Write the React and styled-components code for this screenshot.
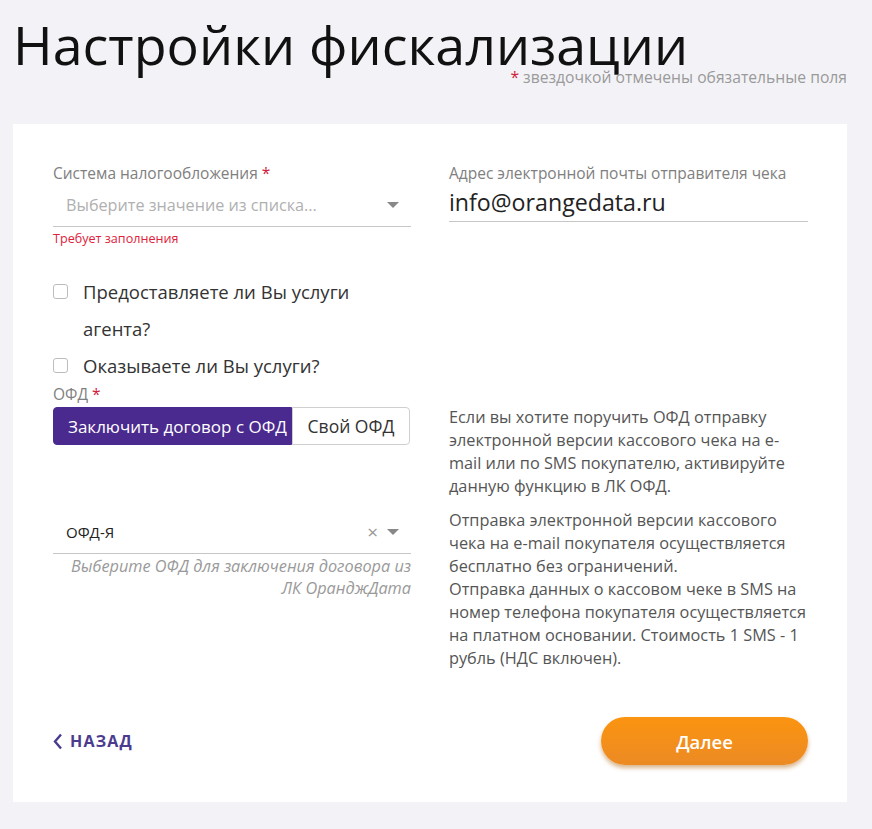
import React, { useState } from 'react';
import styled, { createGlobalStyle } from 'styled-components';

const GlobalStyle = createGlobalStyle`
  html, body {
    margin: 0;
    padding: 0;
    background: #f3f3f7;
    font-family: "Open Sans", "Noto Sans", sans-serif;
  }
`;

const Page = styled.div`
  width: 872px;
  height: 829px;
  padding: 0 25px 27px 13px;
  box-sizing: border-box;
  display: flex;
  flex-direction: column;
`;

const Header = styled.header`
  height: 124px;
  display: flex;
  flex-direction: column;
`;

const Title = styled.h1`
  margin: 19px 0 0 0;
  font-size: 53.8px;
  line-height: 50px;
  font-weight: 400;
  color: #111;
  white-space: nowrap;
`;

const RequiredNote = styled.div`
  align-self: flex-end;
  font-size: 15.7px;
  line-height: 16px;
  color: #9a9a9a;
  white-space: nowrap;
`;

const Star = styled.span`
  color: #d0213b;
  margin-right: 4px;
`;

const Card = styled.main`
  flex: 1;
  background: #fff;
  padding: 40px 39px 37px 40px;
  display: flex;
  flex-direction: column;
`;

const Columns = styled.div`
  display: grid;
  grid-template-columns: 358px 359px;
  column-gap: 38px;
  flex: 1;
`;

const Column = styled.div`
  display: flex;
  flex-direction: column;
`;

const Label = styled.div`
  font-size: 15.5px;
  color: #808080;
  line-height: 19px;
  white-space: nowrap;
`;

const Field = styled.div`
  display: flex;
  align-items: center;
  height: ${({ h }) => h || 34}px;
  border-bottom: 1px solid #c6c6c6;
  padding-left: ${({ pl }) => pl || 0}px;
  padding-right: 12px;
`;

const Placeholder = styled.span`
  flex: 1;
  font-size: 16.2px;
  color: #b0b0b0;
`;

const Value = styled.span`
  flex: 1;
  font-size: ${({ size }) => size || 15}px;
  color: #222;
`;

const Caret = styled.span`
  width: 0;
  height: 0;
  border-left: 6px solid transparent;
  border-right: 6px solid transparent;
  border-top: 6px solid #888;
`;

const Clear = styled.span`
  font-size: 19px;
  color: #999;
  margin-right: 9px;
  line-height: 1;
`;

const Error = styled.div`
  font-size: 12.6px;
  line-height: 17px;
  color: #e0213b;
  margin-top: 3px;
`;

const Checks = styled.div`
  margin-top: 26px;
  display: flex;
  flex-direction: column;
`;

const CheckRow = styled.label`
  display: flex;
  align-items: flex-start;
  gap: 15px;
  font-size: 18.5px;
  line-height: 37px;
  color: #333;
  cursor: pointer;
`;

const Box = styled.span`
  flex: none;
  width: 15px;
  height: 15px;
  margin-top: 11px;
  border: 1px solid #bdbdbd;
  border-radius: 3px;
  box-sizing: border-box;
  background: ${({ checked }) => (checked ? '#4a2a90' : '#fff')};
`;

const OfdLabel = styled(Label)`
  margin-top: 1px;
`;

const Segments = styled.div`
  display: flex;
  margin-top: 3px;
  height: 38px;
`;

const Segment = styled.button`
  height: 38px;
  border: 1px solid ${({ active }) => (active ? '#4a2a8e' : '#cfcfcf')};
  background: ${({ active }) => (active ? '#4a2a8e' : '#fff')};
  color: ${({ active }) => (active ? '#fff' : '#333')};
  font-family: inherit;
  font-size: ${({ active }) => (active ? 17 : 17.5)}px;
  padding: 0 0 0 ${({ wide }) => (wide ? 14 : 0)}px;
  text-align: ${({ wide }) => (wide ? 'left' : 'center')};
  width: ${({ wide }) => (wide ? 239 : 118)}px;
  border-radius: ${({ first }) => (first ? '4px 0 0 4px' : '0 4px 4px 0')};
  cursor: pointer;
  white-space: nowrap;
`;

const OfdField = styled.div`
  margin-top: 66px;
`;

const Hint = styled.div`
  margin-top: 1px;
  text-align: right;
  font-style: italic;
  font-size: 16.3px;
  line-height: 22px;
  color: #9a9a9a;
  white-space: nowrap;
`;

const Info = styled.div`
  margin-top: 184px;
  font-size: 16.3px;
  line-height: 23px;
  color: #555;
  white-space: nowrap;
`;

const Para = styled.p`
  margin: 0 0 11px 0;
`;

const Footer = styled.footer`
  display: flex;
  justify-content: space-between;
  align-items: center;
`;

const BackLink = styled.a`
  display: flex;
  align-items: center;
  gap: 7px;
  font-size: 16px;
  font-weight: 700;
  letter-spacing: 1.2px;
  color: #4a3b8f;
  text-transform: uppercase;
  text-decoration: none;
  cursor: pointer;
`;

const NextButton = styled.button`
  width: 207px;
  height: 48px;
  border: none;
  border-radius: 24px;
  background: linear-gradient(180deg, #fb9410 0%, #ec8a24 100%);
  box-shadow: 0 3px 4px rgba(170, 90, 0, 0.45);
  color: #fff;
  font-family: inherit;
  font-size: 18.5px;
  font-weight: 600;
  cursor: pointer;
`;

const App = () => {
  const [agent, setAgent] = useState(false);
  const [services, setServices] = useState(false);
  const [ofdMode, setOfdMode] = useState('contract');

  return (
    <>
      <GlobalStyle />
      <Page>
        <Header>
          <Title>Настройки фискализации</Title>
          <RequiredNote>
            <Star>*</Star>звездочкой отмечены обязательные поля
          </RequiredNote>
        </Header>
        <Card>
          <Columns>
            <Column>
              <Label>
                Система налогообложения <Star>*</Star>
              </Label>
              <Field h={43} pl={13}>
                <Placeholder>Выберите значение из списка...</Placeholder>
                <Caret />
              </Field>
              <Error>Требует заполнения</Error>

              <Checks>
                <CheckRow onClick={() => setAgent(!agent)}>
                  <Box checked={agent} />
                  <span>
                    Предоставляете ли Вы услуги
                    <br />
                    агента?
                  </span>
                </CheckRow>
                <CheckRow onClick={() => setServices(!services)}>
                  <Box checked={services} />
                  <span>Оказываете ли Вы услуги?</span>
                </CheckRow>
              </Checks>

              <OfdLabel>
                ОФД <Star>*</Star>
              </OfdLabel>
              <Segments>
                <Segment
                  first
                  wide
                  active={ofdMode === 'contract'}
                  onClick={() => setOfdMode('contract')}
                >
                  Заключить договор с ОФД
                </Segment>
                <Segment active={ofdMode === 'own'} onClick={() => setOfdMode('own')}>
                  Свой ОФД
                </Segment>
              </Segments>

              <OfdField>
                <Field h={42} pl={13}>
                  <Value>ОФД-Я</Value>
                  <Clear>×</Clear>
                  <Caret />
                </Field>
                <Hint>
                  Выберите ОФД для заключения договора из
                  <br />
                  ЛК ОранджДата
                </Hint>
              </OfdField>
            </Column>

            <Column>
              <Label>Адрес электронной почты отправителя чека</Label>
              <Field h={38}>
                <Value size={23.2}>info@orangedata.ru</Value>
              </Field>
              <Info>
                <Para>
                  Если вы хотите поручить ОФД отправку
                  <br />
                  электронной версии кассового чека на e-
                  <br />
                  mail или по SMS покупателю, активируйте
                  <br />
                  данную функцию в ЛК ОФД.
                </Para>
                <Para>
                  Отправка электронной версии кассового
                  <br />
                  чека на e-mail покупателя осуществляется
                  <br />
                  бесплатно без ограничений.
                  <br />
                  Отправка данных о кассовом чеке в SMS на
                  <br />
                  номер телефона покупателя осуществляется
                  <br />
                  на платном основании. Стоимость 1 SMS - 1
                  <br />
                  рубль (НДС включен).
                </Para>
              </Info>
            </Column>
          </Columns>

          <Footer>
            <BackLink>
              <svg width="10" height="17" viewBox="0 0 10 17">
                <path d="M8 1.5 L2 8.5 L8 15.5" fill="none" stroke="#4a3b8f" strokeWidth="2.4" />
              </svg>
              Назад
            </BackLink>
            <NextButton>Далее</NextButton>
          </Footer>
        </Card>
      </Page>
    </>
  );
};

export default App;
